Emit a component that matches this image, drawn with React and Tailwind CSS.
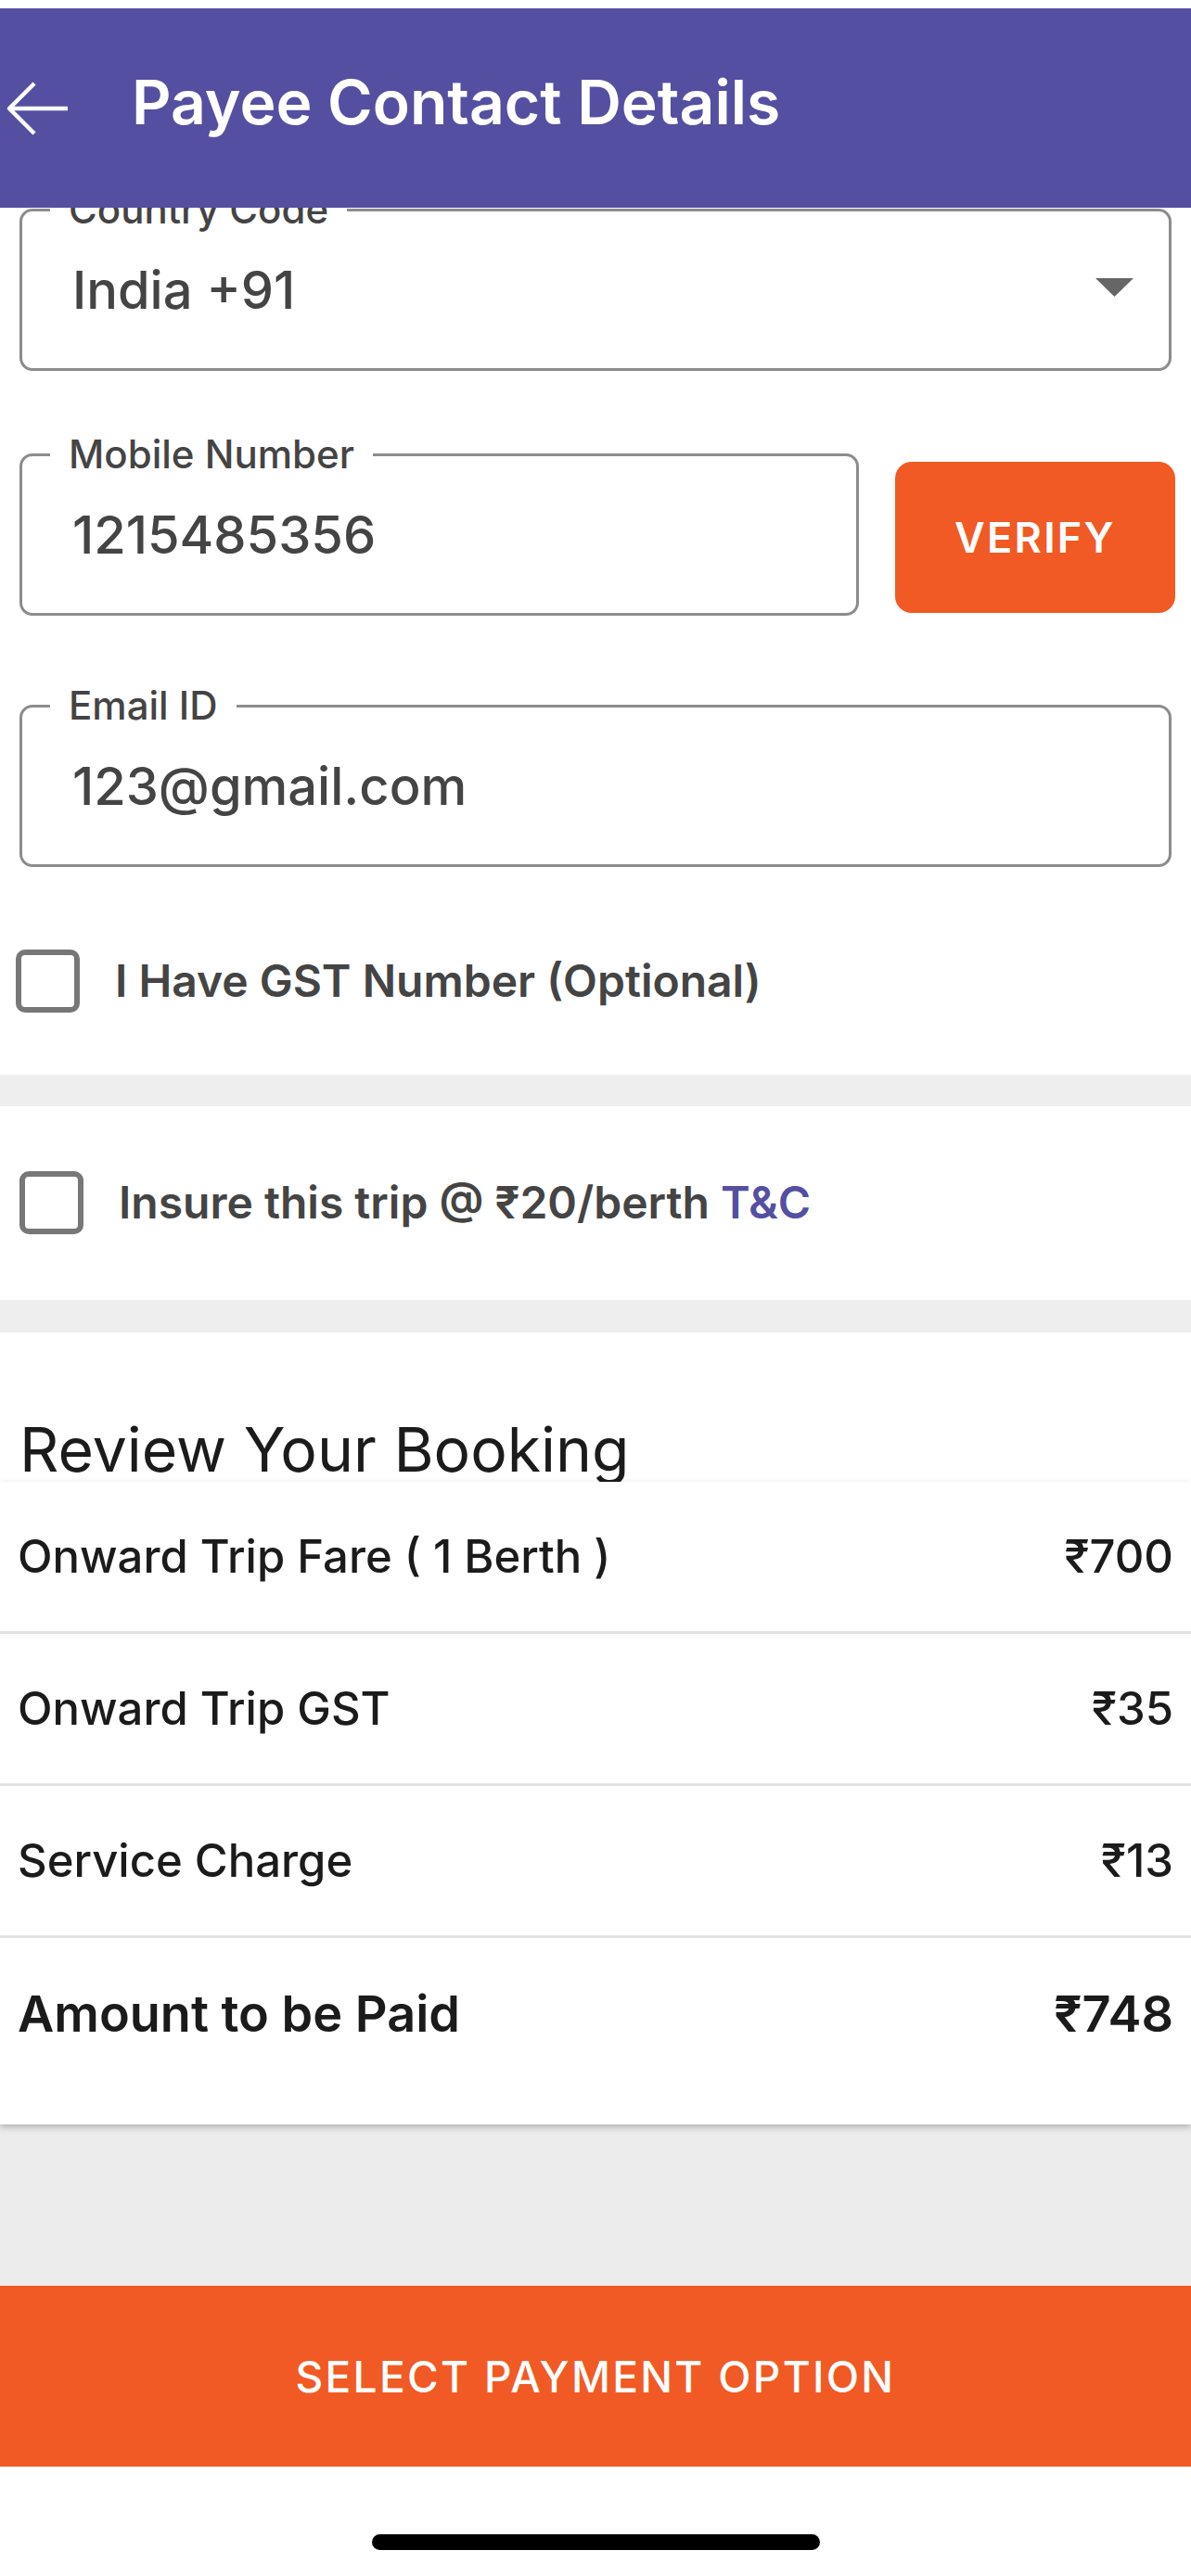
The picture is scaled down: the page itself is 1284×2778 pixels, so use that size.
import React from "react";

const OutlinedField = ({ label, children, className = "" }) => (
  <fieldset className={`rounded-[14px] border-[3px] border-[#8c8c8c] pb-[21px] ${className}`}>
    <legend className="ml-[30px] px-[20px] text-[42px] font-medium leading-[48px] text-[#444444]">
      {label}
    </legend>
    <div className="flex h-[126px] items-center justify-between pl-[54px] pr-[38px] text-[56px] font-medium leading-none text-[#444444]">
      {children}
    </div>
  </fieldset>
);

const CheckRow = ({ children, className = "" }) => (
  <div className={`flex items-center ${className}`}>
    <div className="h-[68px] w-[69px] shrink-0 rounded-[10px] border-[6px] border-[#777777] bg-white" />
    <div className="ml-[38px] text-[48px] font-semibold leading-none text-[#444444]">{children}</div>
  </div>
);

const FareRow = ({ label, value, last = false }) =>
  last ? (
    <div className="flex h-[201px] items-center justify-between px-[19px] pb-[37px] text-[54px] font-semibold leading-none text-[#1b1b1b]">
      <span>{label}</span>
      <span>{value}</span>
    </div>
  ) : (
    <div className="flex h-[164px] items-center justify-between border-b-[3px] border-[#e2e2e2] px-[19px] text-[49px] font-medium leading-none text-[#1b1b1b]">
      <span>{label}</span>
      <span>{value}</span>
    </div>
  );

export default function App() {
  return (
    <div className="flex h-[2778px] flex-col overflow-hidden bg-white font-[Inter,'Noto_Sans',sans-serif]">
      <div className="h-[9px] bg-white" />

      {/* App bar */}
      <header className="relative z-10 flex h-[215px] items-center bg-[#544fa1]">
        <svg className="ml-[6px]" width="68" height="60" viewBox="0 0 68 60" fill="none">
          <path d="M67 30H4M31 3L4 30L31 57" stroke="white" strokeWidth="4.5" strokeLinejoin="round" />
        </svg>
        <h1 className="ml-[68px] pb-[13px] text-[66px] font-semibold leading-none text-white">
          Payee Contact Details
        </h1>
      </header>

      {/* Contact form */}
      <div className="-mt-[22px]">
        <OutlinedField label="Country Code" className="mx-[21px]">
          <span>India +91</span>
          <svg width="41" height="20" viewBox="0 0 41 20" className="-mt-[6px]">
            <polygon points="0,0 41,0 20.5,20" fill="#666666" />
          </svg>
        </OutlinedField>

        <div className="mt-[66px] flex items-end pl-[21px] pr-[17px]">
          <OutlinedField label="Mobile Number" className="flex-1">
            <span>1215485356</span>
          </OutlinedField>
          <button className="mb-[3px] ml-[39px] flex h-[163px] w-[302px] items-center justify-center rounded-[18px] bg-[#f15a24] text-[45px] font-semibold leading-none tracking-[0.05em] text-white">
            VERIFY
          </button>
        </div>

        <OutlinedField label="Email ID" className="mx-[21px] mt-[73px]">
          <span>123@gmail.com</span>
        </OutlinedField>
      </div>

      <CheckRow className="pl-[17px] pt-[89px] pb-[67px]">I Have GST Number (Optional)</CheckRow>
      <div className="h-[34px] bg-[#eeeeee]" />
      <CheckRow className="pl-[21px] pt-[70px] pb-[71px]">
        Insure this trip @ ₹20/berth <span className="text-[#544fa1]">T&amp;C</span>
      </CheckRow>
      <div className="h-[35px] bg-[#eeeeee]" />

      {/* Review */}
      <div className="h-[161px] pl-[21px] pt-[93px]">
        <h2 className="text-[66px] font-normal leading-none text-[#1b1b1b]">Review Your Booking</h2>
      </div>
      <div className="relative bg-white shadow-[0_3px_7px_rgba(0,0,0,0.25)]">
        <FareRow label="Onward Trip Fare ( 1 Berth )" value="₹700" />
        <FareRow label="Onward Trip GST" value="₹35" />
        <FareRow label="Service Charge" value="₹13" />
        <FareRow label="Amount to be Paid" value="₹748" last />
      </div>

      <div className="flex-1 bg-[#ececec]" />

      <button className="flex h-[195px] w-full shrink-0 items-center justify-center bg-[#f15a24] text-[46px] font-medium leading-none tracking-[0.05em] text-white">
        SELECT PAYMENT OPTION
      </button>

      <div className="flex h-[118px] shrink-0 justify-center bg-white pt-[73px]">
        <div className="h-[17px] w-[483px] rounded-full bg-black" />
      </div>
    </div>
  );
}
